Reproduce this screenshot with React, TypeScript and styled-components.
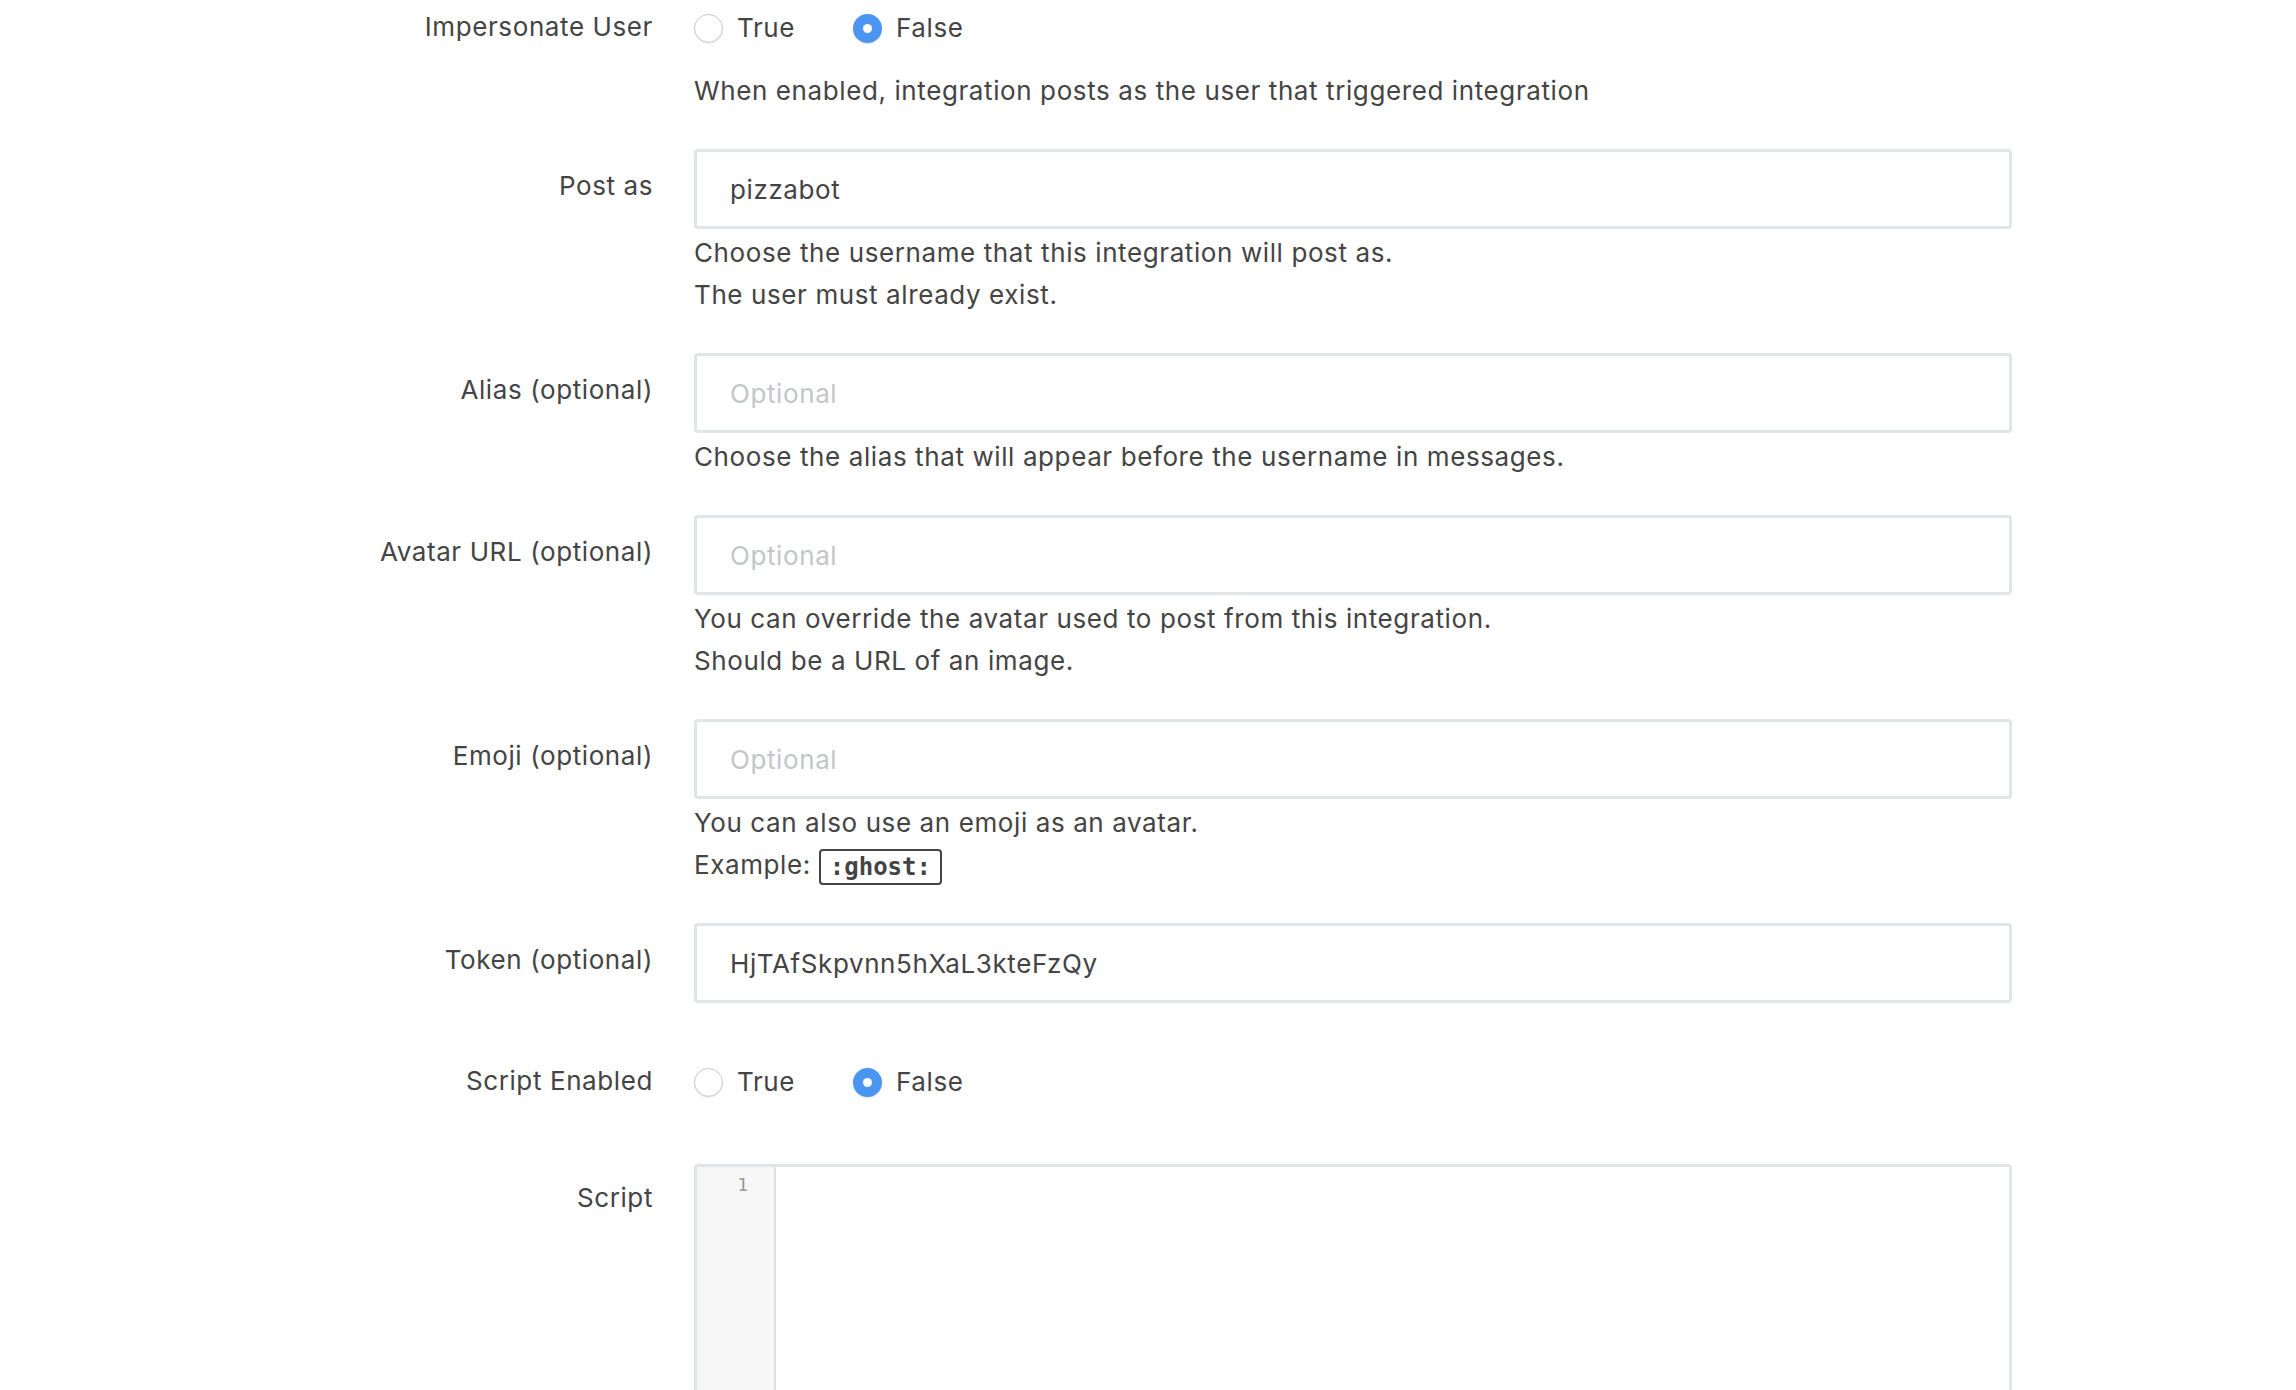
import React from "react";
import styled, { createGlobalStyle } from "styled-components";

const GlobalStyle = createGlobalStyle`
  html, body { margin: 0; padding: 0; background: #fff; }
  body {
    font-family: Inter, "Noto Sans", "Liberation Sans", sans-serif;
    color: #444;
    -webkit-font-smoothing: antialiased;
  }
  * { box-sizing: border-box; }
`;

const Form = styled.form`
  display: flex;
  flex-direction: column;
  gap: 37px;
  margin-top: -14px;
`;

const Row = styled.div`
  display: grid;
  grid-template-columns: 653px 1318px;
  column-gap: 41px;
`;

const Label = styled.label<{ $radio?: boolean }>`
  text-align: right;
  font-size: 26px;
  letter-spacing: 0.6px;
  line-height: 42px;
  padding-top: ${(p) => (p.$radio ? 20 : 16)}px;
  color: #444;
`;

const Field = styled.div`
  display: flex;
  flex-direction: column;
`;

const Input = styled.input`
  width: 100%;
  height: 80px;
  border: 3px solid #e1e5e8;
  border-radius: 4px;
  padding: 0 33px;
  font-family: inherit;
  font-size: 26px;
  letter-spacing: 0.6px;
  color: #444;
  outline: none;
  &::placeholder { color: #c3c6c9; }
  & + div { margin-top: 3px; }
`;

const Help = styled.div`
  font-size: 26px;
  letter-spacing: 0.6px;
  line-height: 42px;
  color: #444;
`;

const RadioGroup = styled.div`
  display: flex;
  align-items: center;
  height: 84px;
  gap: 58px;
`;

const RadioOption = styled.span`
  display: flex;
  align-items: center;
  gap: 14px;
  font-size: 26px;
  letter-spacing: 0.6px;
  line-height: 42px;
`;

const RadioCircle = styled.span<{ $checked?: boolean }>`
  width: 29px;
  height: 29px;
  border-radius: 50%;
  display: flex;
  align-items: center;
  justify-content: center;
  background: ${(p) => (p.$checked ? "#4b95f2" : "#fff")};
  border: ${(p) => (p.$checked ? "none" : "1.5px solid #c8c8c8")};
  box-shadow: ${(p) =>
    p.$checked ? "0 1px 2px rgba(0,0,0,0.12)" : "inset 0 -1px 1px rgba(0,0,0,0.06), 0 1px 1px rgba(0,0,0,0.05)"};
  &::after {
    content: "";
    display: ${(p) => (p.$checked ? "block" : "none")};
    width: 9px;
    height: 9px;
    border-radius: 50%;
    background: #fff;
  }
`;

const Code = styled.code`
  display: inline-block;
  border: 2px solid #444;
  border-radius: 4px;
  padding: 0 9px;
  font-family: "DejaVu Sans Mono", "Liberation Mono", monospace;
  font-weight: 700;
  font-size: 24px;
  line-height: 32px;
  letter-spacing: 0;
  color: #444;
  vertical-align: middle;
`;

const Editor = styled.div`
  display: flex;
  height: 420px;
  margin-top: 3px;
  border: 3px solid #e1e5e8;
  border-bottom: none;
  border-radius: 4px 4px 0 0;
`;

const Gutter = styled.div`
  width: 79px;
  background: #f7f7f7;
  border-right: 2px solid #dedede;
  text-align: right;
  padding: 6px 26px 0 0;
  font-family: "DejaVu Sans Mono", "Liberation Mono", monospace;
  font-size: 18px;
  line-height: 24px;
  color: #999;
`;

const CodeArea = styled.div`
  flex: 1;
  background: #fff;
`;

const Radio: React.FC<{ value: boolean }> = ({ value }) => (
  <RadioGroup>
    <RadioOption>
      <RadioCircle $checked={value} />
      True
    </RadioOption>
    <RadioOption>
      <RadioCircle $checked={!value} />
      False
    </RadioOption>
  </RadioGroup>
);

export default function App() {
  return (
    <>
      <GlobalStyle />
      <Form>
        <Row>
          <Label $radio>Impersonate User</Label>
          <Field>
            <Radio value={false} />
            <Help>When enabled, integration posts as the user that triggered integration</Help>
          </Field>
        </Row>
        <Row>
          <Label>Post as</Label>
          <Field>
            <Input defaultValue="pizzabot" />
            <Help>Choose the username that this integration will post as.</Help>
            <Help>The user must already exist.</Help>
          </Field>
        </Row>
        <Row>
          <Label>Alias (optional)</Label>
          <Field>
            <Input placeholder="Optional" />
            <Help>Choose the alias that will appear before the username in messages.</Help>
          </Field>
        </Row>
        <Row>
          <Label>Avatar URL (optional)</Label>
          <Field>
            <Input placeholder="Optional" />
            <Help>You can override the avatar used to post from this integration.</Help>
            <Help>Should be a URL of an image.</Help>
          </Field>
        </Row>
        <Row>
          <Label>Emoji (optional)</Label>
          <Field>
            <Input placeholder="Optional" />
            <Help>You can also use an emoji as an avatar.</Help>
            <Help>
              Example: <Code>:ghost:</Code>
            </Help>
          </Field>
        </Row>
        <Row>
          <Label>Token (optional)</Label>
          <Field>
            <Input defaultValue="HjTAfSkpvnn5hXaL3kteFzQy" />
          </Field>
        </Row>
        <Row>
          <Label $radio>Script Enabled</Label>
          <Field>
            <Radio value={false} />
          </Field>
        </Row>
        <Row>
          <Label>Script</Label>
          <Field>
            <Editor>
              <Gutter>1</Gutter>
              <CodeArea />
            </Editor>
          </Field>
        </Row>
      </Form>
    </>
  );
}
